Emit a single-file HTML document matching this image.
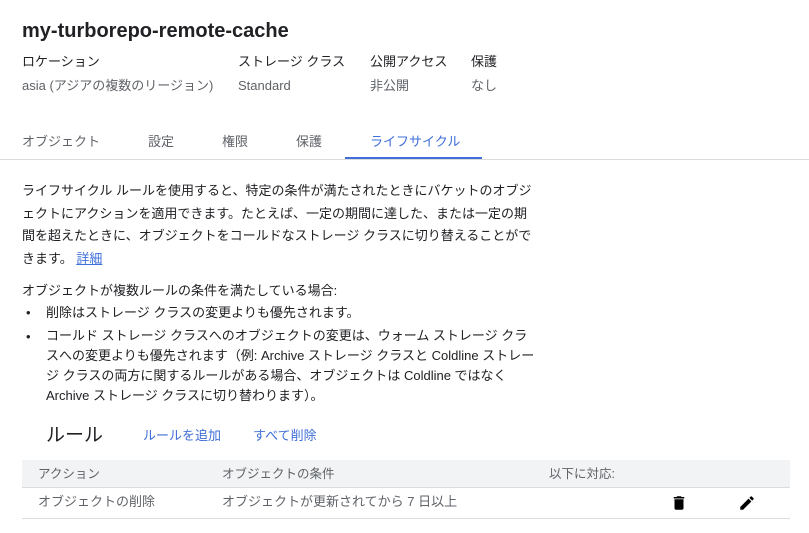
<!DOCTYPE html>
<html><head><meta charset="utf-8"><style>
*{margin:0;padding:0;box-sizing:border-box}
body{width:809px;height:533px;background:#fff;font-family:"Liberation Sans","Noto Sans CJK JP",sans-serif;color:#202124;position:relative;overflow:hidden;font-size:13px}
.a{position:absolute;white-space:nowrap;line-height:18px}
.g{color:#5f6368}
.b{color:#3f6fd8}
p.t{position:absolute;left:22px;width:515px;line-height:22.5px;font-size:13px}
</style></head><body>
<div class="a" style="left:22px;top:19px;font-size:20px;font-weight:bold;line-height:24px">my-turborepo-remote-cache</div>
<div class="a" style="left:22px;top:53px">ロケーション</div>
<div class="a" style="left:238px;top:53px">ストレージ クラス</div>
<div class="a" style="left:370px;top:53px">公開アクセス</div>
<div class="a" style="left:471px;top:53px">保護</div>
<div class="a g" style="left:22px;top:77px">asia (アジアの複数のリージョン)</div>
<div class="a g" style="left:238px;top:77px">Standard</div>
<div class="a g" style="left:370px;top:77px">非公開</div>
<div class="a g" style="left:471px;top:77px">なし</div>
<div class="a g" style="left:22px;top:133px">オブジェクト</div>
<div class="a g" style="left:148px;top:133px">設定</div>
<div class="a g" style="left:222px;top:133px">権限</div>
<div class="a g" style="left:296px;top:133px">保護</div>
<div class="a b" style="left:370px;top:133px">ライフサイクル</div>
<div class="a" style="left:345px;top:157px;width:137px;height:2px;background:#3f6fd8"></div>
<div class="a" style="left:0;top:159px;width:809px;height:1px;background:#dadce0"></div>
<p class="t" style="top:180px">ライフサイクル ルールを使用すると、特定の条件が満たされたときにバケットのオブジェクトにアクションを適用できます。たとえば、一定の期間に達した、または一定の期間を超えたときに、オブジェクトをコールドなストレージ クラスに切り替えることができます。 <span class="b" style="text-decoration:underline">詳細</span></p>
<div class="a" style="left:22px;top:282px">オブジェクトが複数ルールの条件を満たしている場合:</div>
<div class="a" style="left:26px;top:304px">•</div>
<div class="a" style="left:46px;top:304px">削除はストレージ クラスの変更よりも優先されます。</div>
<div class="a" style="left:26px;top:328px">•</div>
<p class="t" style="left:46px;top:326px;width:493px;line-height:20px">コールド ストレージ クラスへのオブジェクトの変更は、ウォーム ストレージ クラスへの変更よりも優先されます（例: Archive ストレージ クラスと Coldline ストレージ クラスの両方に関するルールがある場合、オブジェクトは Coldline ではなく Archive ストレージ クラスに切り替わります）。</p>
<div class="a" style="left:46px;top:424px;font-size:19px;line-height:24px">ルール</div>
<div class="a b" style="left:143px;top:427px">ルールを追加</div>
<div class="a b" style="left:253px;top:427px">すべて削除</div>
<div class="a" style="left:22px;top:460px;width:768px;height:28px;background:#f1f3f4;border-bottom:1px solid #dadce0"></div>
<div class="a g" style="left:38px;top:465px;font-size:12.5px">アクション</div>
<div class="a g" style="left:222px;top:465px;font-size:12.5px">オブジェクトの条件</div>
<div class="a g" style="left:549px;top:465px;font-size:12.5px">以下に対応:</div>
<div class="a g" style="left:38px;top:493px">オブジェクトの削除</div>
<div class="a g" style="left:222px;top:493px">オブジェクトが更新されてから 7 日以上</div>
<div class="a" style="left:22px;top:518px;width:768px;height:1px;background:#dadce0"></div>
<svg class="a" style="left:670px;top:494px" width="18" height="18" viewBox="0 0 24 24"><path d="M6 19c0 1.1.9 2 2 2h8c1.1 0 2-.9 2-2V7H6v12zM19 4h-3.5l-1-1h-5l-1 1H5v2h14V4z" fill="#000"/></svg>
<svg class="a" style="left:738px;top:494px" width="18" height="18" viewBox="0 0 24 24"><path d="M3 17.25V21h3.75L17.81 9.94l-3.75-3.75L3 17.25zM20.71 7.04a1 1 0 000-1.41l-2.34-2.34a1 1 0 00-1.41 0l-1.83 1.83 3.75 3.75 1.83-1.83z" fill="#000"/></svg>
</body></html>
